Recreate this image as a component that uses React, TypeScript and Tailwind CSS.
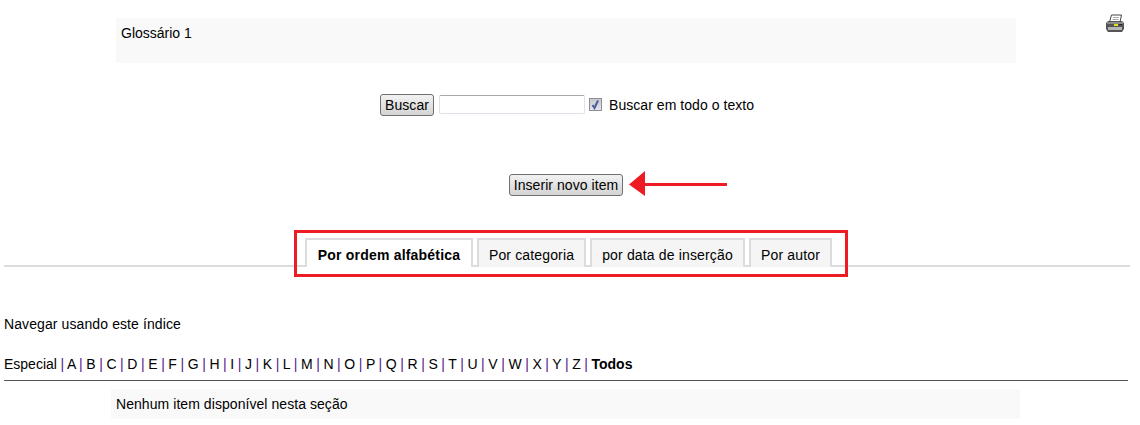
import React from 'react';

const letters = 'A B C D E F G H I J K L M N O P Q R S T U V W X Y Z'.split(' ');
const tabs = [
  { label: 'Por categoria', width: 'w-[109px]' },
  { label: 'por data de inserção', width: 'w-[155px]' },
  { label: 'Por autor', width: 'w-[83px]' },
];

const PrinterIcon = () => (
  <svg width="18" height="18" viewBox="0 0 18 18" className="block">
    <path d="M5.5 1 H15.5 L14 8 H3.5 Z" fill="#fff" stroke="#444" strokeWidth="1" />
    <path d="M7 3.5 H13 M6.5 5.5 H12.5" stroke="#aaa" strokeWidth="1" />
    <path d="M2 7 H16 L18 9 V15 L16 18 H2 L0 15 V9 Z" fill="#555" />
    <rect x="1" y="8" width="16" height="2" fill="#8a8a8a" />
    <rect x="2" y="13" width="14" height="3" fill="#b5b5b5" />
    <rect x="8" y="10" width="4" height="2" fill="#e0e020" />
    <rect x="13" y="10" width="3" height="1" fill="#222" />
  </svg>
);

const Button = ({ label, className }: { label: string; className: string }) => (
  <button className={`h-[22px] rounded-[3px] border border-[#707070] bg-gradient-to-b from-[#f2f2f2] to-[#d4d4d4] text-[14px] leading-none tracking-[0.06px] text-black ${className}`}>
    {label}
  </button>
);

export default function App() {
  return (
    <div className="relative h-[425px] w-[1140px] overflow-hidden bg-white pt-[18px] font-['Liberation_Sans',Arial,sans-serif] text-[14px] text-black">
      <div className="flex">
        <div className="ml-[116px] h-[45px] w-[900px] bg-[#f9f9f9] pl-[5px] pt-[6px] leading-[18px]">Glossário 1</div>
        <div className="ml-[90px] -mt-[4px]">
          <PrinterIcon />
        </div>
      </div>

      <div className="ml-[380px] mt-[31px] flex h-[22px] items-start">
        <Button label="Buscar" className="w-[54px]" />
        <input className="ml-[5px] mt-[1px] h-[19px] w-[146px] rounded-[2px] border border-[#dfe2ea] border-t-[#a8a8a8] bg-white" />
        <span className="ml-[4px] mt-[4px] flex h-[13px] w-[13px] items-center justify-center border border-[#8e8f8f] bg-gradient-to-b from-[#c8c8d0] to-[#e4e4ec]">
          <svg width="11" height="11" viewBox="0 0 11 11">
            <path d="M2.5 6 L4.5 9 L8 1.5" fill="none" stroke="#4a5f97" strokeWidth="2" />
          </svg>
        </span>
        <span className="ml-[7px] mt-[2px] leading-[18px] tracking-[0.05px]">Buscar em todo o texto</span>
      </div>

      <div className="relative ml-[509px] mt-[58px] h-[22px] w-[114px]">
        <Button label="Inserir novo item" className="w-[114px]" />
        <svg width="100" height="28" viewBox="0 0 100 28" className="absolute left-[119px] top-[-4px]">
          <path d="M1 14.5 L17 1 V13 H99 V16 H17 V26 Z" fill="#ed1c24" />
        </svg>
      </div>

      <div className="relative ml-[4px] mt-[42px] h-[29px] w-[1126px] border-b-2 border-[#dcdcdc]">
        <div className="ml-[301px] flex h-[29px] gap-[4px]">
          <div className="z-10 flex h-[29px] w-[168px] items-center justify-center border-2 border-b-0 border-[#dcdcdc] bg-white pt-[4px] font-bold tracking-[0.2px]">
            Por ordem alfabética
          </div>
          {tabs.map((t) => (
            <div key={t.label} className={`flex h-[29px] items-center justify-center whitespace-nowrap border-2 border-b-0 border-[#dcdcdc] bg-[#f5f5f5] pt-[4px] tracking-[0.15px] ${t.width}`}>
              {t.label}
            </div>
          ))}
        </div>
        <div className="absolute left-[290px] top-[-8px] z-20 h-[47px] w-[554px] border-[3px] border-[#ed1c24]" />
      </div>

      <div className="ml-[4px] mt-[48px] leading-[18px] tracking-[0.1px]">Navegar usando este índice</div>

      <div className="ml-[4px] mt-[22px] whitespace-nowrap leading-[18px] [word-spacing:-0.32px]">
        Especial
        {letters.map((l) => (
          <span key={l}>
            <span className="text-[#551a8b]"> | </span>
            {l}
          </span>
        ))}
        <span className="text-[#551a8b]"> | </span>
        <b>Todos</b>
      </div>

      <div className="ml-[4px] mt-[7px] h-px w-[1124px] bg-[#555]" />

      <div className="ml-[111px] mt-[8px] h-[30px] w-[909px] bg-[#f9f9f9] pl-[5px] pt-[6px] leading-[18px] tracking-[0.06px]">
        Nenhum item disponível nesta seção
      </div>
    </div>
  );
}
